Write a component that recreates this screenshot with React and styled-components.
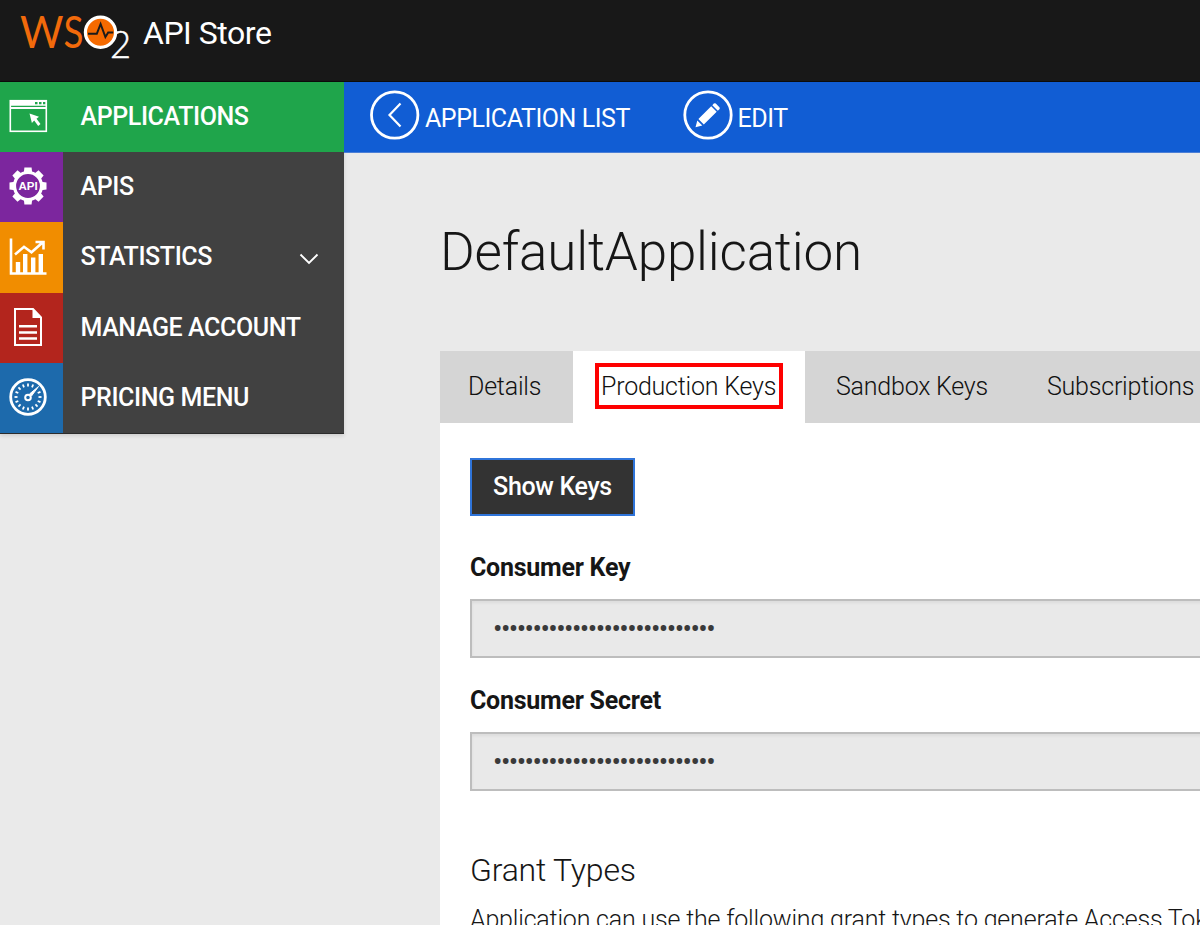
import React from "react";
import styled, { createGlobalStyle } from "styled-components";

const GlobalStyle = createGlobalStyle`
  * { box-sizing: border-box; }
  html, body { margin: 0; padding: 0; }
  body {
    background: #eaeaea;
    color: #161616;
    font-family: Roboto, "Liberation Sans", sans-serif;
    overflow: hidden;
  }
  svg { display: block; flex: none; }
`;

const Page = styled.div`
  width: 1200px;
  height: 925px;
  overflow: hidden;
  background: #eaeaea;
`;

const Header = styled.header`
  display: flex;
  height: 82px;
  background: #181818;
  border-bottom: 1px solid #0c0c0c;
`;

const Brand = styled.span`
  margin: 13px 0 0 11px;
  color: #fff;
  font-size: 32px;
  line-height: 40px;
  letter-spacing: -0.47px;
  white-space: nowrap;
`;

const Body = styled.div`
  display: flex;
  align-items: flex-start;
`;

const Sidebar = styled.nav`
  flex: none;
  width: 344px;
  height: 352px;
  display: flex;
  flex-direction: column;
  background: #414141;
  border-bottom: 1px solid #2c2c2c;
  box-shadow: 0 2px 4px rgba(0, 0, 0, 0.12);
`;

const NavItem = styled.a`
  flex: 1;
  display: flex;
  align-items: center;
  background: ${(p) => p.$bg || "transparent"};
`;

const NavIcon = styled.span`
  width: 63px;
  align-self: stretch;
  padding: 0 0 2px 8px;
  display: flex;
  align-items: center;
  background: ${(p) => p.$bg};
`;

const NavLabel = styled.span`
  flex: 1;
  padding: 0 0 0.4px 17.5px;
  color: #fff;
  font-size: 25px;
  font-weight: 500;
  line-height: 30px;
  letter-spacing: -0.4px;
  white-space: nowrap;
`;

const Chevron = styled.svg`
  margin: 2px 25px 0 0;
`;

const Main = styled.main`
  flex: 1;
  min-width: 0;
`;

const ActionBar = styled.div`
  display: flex;
  height: 71px;
  padding: 8px 0 0 26px;
  background: #115dd4;
  border-bottom: 1px solid #4c7fd6;
`;

const Action = styled.a`
  display: flex;
  width: ${(p) => p.$width};
  color: #fff;
  font-size: 25px;
  line-height: 30px;
  letter-spacing: -0.45px;
  white-space: nowrap;
`;

const ActionLabel = styled.span`
  margin: 14px 0 0 5px;
`;

const Content = styled.section`
  width: 900px;
  padding-left: 96px;
`;

const Title = styled.h1`
  margin: 0;
  padding: 67px 0 0 0;
  height: 198px;
  font-size: 53px;
  font-weight: 300;
  line-height: 64px;
  letter-spacing: -0.2px;
`;

const Tabs = styled.div`
  display: flex;
  height: 72px;
  background: #d5d5d5;
`;

const Tab = styled.a`
  flex: none;
  display: flex;
  align-items: center;
  width: ${(p) => p.$width};
  padding-left: ${(p) => p.$pad};
  padding-bottom: 2px;
  background: ${(p) => (p.$active ? "#fff" : "transparent")};
  color: #111;
  font-size: 25px;
  font-weight: 300;
  letter-spacing: -0.22px;
  white-space: nowrap;
`;

const Highlight = styled.span`
  display: flex;
  align-items: center;
  width: 188px;
  height: 46px;
  padding-left: 2px;
  border: 4px solid #fe0000;
`;

const Panel = styled.div`
  height: 520px;
  padding: 35px 0 0 30px;
  background: #fff;
`;

const ShowKeys = styled.button`
  display: block;
  width: 165px;
  height: 58px;
  padding: 0 0 1px;
  border: 2px solid #2f74d9;
  background: #333;
  color: #fff;
  font-family: inherit;
  font-size: 25px;
  font-weight: 500;
  letter-spacing: -0.33px;
`;

const FieldLabel = styled.label`
  display: block;
  margin-top: ${(p) => p.$top};
  font-size: 25px;
  font-weight: 700;
  line-height: 30px;
  letter-spacing: -0.25px;
`;

const SecretField = styled.div`
  width: 780px;
  height: 59px;
  margin-top: 16px;
  padding: 13px 0 0 21px;
  border: 2px solid #bdbdbd;
  background: #e9e9e9;
  box-shadow: inset 0 2px 3px rgba(0, 0, 0, 0.06);
  color: #3a3a3a;
  font-size: 28px;
  line-height: 30px;
  letter-spacing: -1.55px;
`;

const SectionTitle = styled.h2`
  margin: 59px 0 0;
  font-size: 32px;
  font-weight: 300;
  line-height: 40px;
  letter-spacing: -0.2px;
`;

const Note = styled.p`
  margin: 15px 0 0;
  font-size: 25px;
  font-weight: 300;
  line-height: 30px;
  letter-spacing: -0.19px;
  white-space: nowrap;
`;

const Logo = () => (
  <svg width="132" height="70" viewBox="0 0 132 70">
    <g fontFamily="Lato, sans-serif" fontWeight="400">
      <text x="20" y="48" fontSize="43.5" fill="#f26a0b" textLength="43.500" lengthAdjust="spacingAndGlyphs">W</text>
      <text x="63.5" y="48" fontSize="43.5" fill="#f26a0b" textLength="20" lengthAdjust="spacingAndGlyphs">S</text>
      <text x="110" y="58" fontSize="37" fill="#fff" fontWeight="300" stroke="#fff" strokeWidth="0.500" textLength="21" lengthAdjust="spacingAndGlyphs">2</text>
    </g>
    <circle cx="100.5" cy="32.300" r="15.100" fill="#f56a00" stroke="#fff" strokeWidth="3.200" />
    <path d="M88 33.800h8.800l3.800-9.800 4.800 13 2.800-4.500h5" fill="none" stroke="#1b1b1b" strokeWidth="2" />
  </svg>
);

const AppIcon = () => (
  <svg width="40" height="40" viewBox="0 0 40 40">
    <rect x="2.300" y="4.700" width="36" height="30.600" fill="none" stroke="#fff" strokeWidth="1.600" />
    <path d="M2 4h36.500v5.700H2zM2 11h36.500v2H2z" fill="#fff" />
    <path d="M27 6h2.500v2.200H27zM31 6h2.500v2.200H31zM35 6h2.300v2.200H35z" fill="#1fa54b" />
    <path d="M21.500 17.500l9.500 3.300-2.500 2 4 5.300-2.300 1.800-4-5.300-2.300 2.400z" fill="#fff" />
  </svg>
);

const GearIcon = () => (
  <svg width="40" height="40" viewBox="0 0 40 40">
    <g fill="#fff">
      {[0, 45, 90, 135, 180, 225, 270, 315].map((a) => (
        <path key={a} d="M15.800 7l.6-5.500h7.200l.6 5.500z" transform={`rotate(${a} 20 20)`} />
      ))}
    </g>
    <circle cx="20" cy="20" r="13.500" fill="#7c269e" stroke="#fff" strokeWidth="3.200" />
    <text x="20" y="24" textAnchor="middle" fontFamily="Liberation Sans, sans-serif" fontWeight="700" fontSize="11.500" fill="#fff">API</text>
  </svg>
);

const ChartIcon = () => (
  <svg width="40" height="40" viewBox="0 0 40 40" fill="none" stroke="#fff">
    <path d="M3 1.500v35h35.500" strokeWidth="2.600" />
    <path d="M10 36V25M17.200 36V17M25.200 36V20.500M32.800 36V17" strokeWidth="4.400" />
    <path d="M7 17.500l9-7.700 7.500 5.500L34 6M27.500 5h8v7.500" strokeWidth="2.600" />
  </svg>
);

const DocIcon = () => (
  <svg width="40" height="40" viewBox="0 0 40 40" fill="none" stroke="#fff">
    <path d="M7 2h18l8 8.500V38H7z" strokeWidth="2" />
    <path d="M24.500 1.500V11H34z" fill="#fff" stroke="none" />
    <path d="M11 19.300h18M11 25.400h18M11 31.500h18" strokeWidth="2.500" />
  </svg>
);

const GaugeIcon = () => (
  <svg width="40" height="40" viewBox="0 0 40 40" fill="none" stroke="#fff">
    <circle cx="20" cy="20" r="17.300" strokeWidth="2.800" />
    {Array.from({ length: 16 }, (_, i) => i * 22.5)
      .filter((a) => a !== 45)
      .map((a) => (
        <path key={a} d="M20 6.500v3" strokeWidth="1.800" transform={`rotate(${a} 20 20)`} />
      ))}
    <path d="M21.500 17l9-7.500L23.500 19z" fill="#fff" strokeWidth="1" />
    <circle cx="20" cy="20.500" r="2.800" strokeWidth="2" />
  </svg>
);

const BackIcon = () => (
  <svg width="50" height="50" viewBox="0 0 50 50" fill="none" stroke="#fff">
    <circle cx="24.700" cy="25" r="23.200" strokeWidth="2.800" />
    <path d="M30.500 13.500L19.500 25l11 11.500" strokeWidth="2.200" />
  </svg>
);

const EditIcon = () => (
  <svg width="50" height="50" viewBox="0 0 50 50">
    <circle cx="25" cy="25" r="23.200" fill="none" stroke="#fff" strokeWidth="2.800" />
    <path d="M12.500 37.300l1.800-6.900 5 5.200zM15.400 28.900l12.800-12.600 5.500 5.500-12.900 12.700zM29.300 15.200l1.500-1.600q1-.9 2 0l3.600 3.600q.9 1 0 2l-1.600 1.500z" fill="#fff" />
  </svg>
);

const navItems = [
  { label: "APPLICATIONS", color: "#1fa54b", row: "#1fa54b", Icon: AppIcon },
  { label: "APIS", color: "#7c269e", Icon: GearIcon },
  { label: "STATISTICS", color: "#f18d00", Icon: ChartIcon, expandable: true },
  { label: "MANAGE ACCOUNT", color: "#b3251d", Icon: DocIcon },
  { label: "PRICING MENU", color: "#1d6aac", Icon: GaugeIcon },
];

const masked = "•".repeat(28);

export default function App() {
  return (
    <Page>
      <GlobalStyle />
      <Header>
        <Logo />
        <Brand>API Store</Brand>
      </Header>
      <Body>
        <Sidebar>
          {navItems.map(({ label, color, row, Icon, expandable }) => (
            <NavItem key={label} $bg={row}>
              <NavIcon $bg={color}>
                <Icon />
              </NavIcon>
              <NavLabel>{label}</NavLabel>
              {expandable && (
                <Chevron width="20" height="12" viewBox="0 0 20 12" fill="none" stroke="#fff" strokeWidth="1.900">
                  <path d="M1.500 1.500L10 10l8.500-8.500" />
                </Chevron>
              )}
            </NavItem>
          ))}
        </Sidebar>
        <Main>
          <ActionBar>
            <Action $width="312.5px">
              <BackIcon />
              <ActionLabel>APPLICATION LIST</ActionLabel>
            </Action>
            <Action $width="120px">
              <EditIcon />
              <ActionLabel>EDIT</ActionLabel>
            </Action>
          </ActionBar>
          <Content>
            <Title>DefaultApplication</Title>
            <Tabs>
              <Tab $width="133px" $pad="28px">Details</Tab>
              <Tab $width="232px" $pad="22px" $active>
                <Highlight>Production Keys</Highlight>
              </Tab>
              <Tab $width="212px" $pad="31px">Sandbox Keys</Tab>
              <Tab $width="220px" $pad="30px">Subscriptions</Tab>
            </Tabs>
            <Panel>
              <ShowKeys>Show Keys</ShowKeys>
              <FieldLabel $top="37px">Consumer Key</FieldLabel>
              <SecretField>{masked}</SecretField>
              <FieldLabel $top="28px">Consumer Secret</FieldLabel>
              <SecretField>{masked}</SecretField>
              <SectionTitle>Grant Types</SectionTitle>
              <Note>Application can use the following grant types to generate Access Tokens.</Note>
            </Panel>
          </Content>
        </Main>
      </Body>
    </Page>
  );
}
